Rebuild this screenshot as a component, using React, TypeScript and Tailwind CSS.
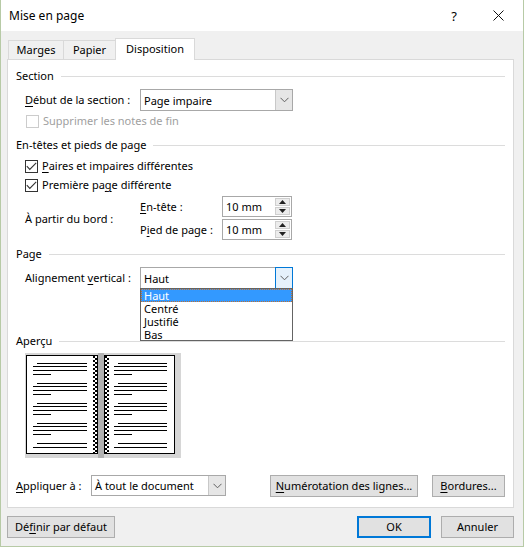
import * as React from "react";

const font = "font-['Segoe_UI','Noto_Sans',Roboto,sans-serif]";

const U = ({ children }: { children: React.ReactNode }) => (
  <span className="underline underline-offset-2">{children}</span>
);

const Chevron = () => (
  <svg width="9" height="6" viewBox="0 0 9 6">
    <path d="M0.5 0.8 L4.5 4.8 L8.5 0.8" fill="none" stroke="#606060" strokeWidth="1" />
  </svg>
);

const Select = (props) => (
  <div
    className={
      "relative flex h-full shrink-0 items-center border border-[#a8a8a8] bg-white " + props.className
    }
  >
    <span className="flex-1 whitespace-nowrap pl-[3px] leading-none">{props.value}</span>
    {props.focused ? (
      <div className="flex h-[calc(100%+2px)] w-[18px] -mr-px items-center justify-center border border-[#0078d7] bg-[#e5f1fb]">
        <Chevron />
      </div>
    ) : (
      <div className="flex h-full w-[17px] items-center justify-center border-l border-[#c8c8c8] bg-[#e6e6e6]">
        <Chevron />
      </div>
    )}
  </div>
);

const Check = (props) => (
  <div className="flex h-[16px] items-center">
    <div
      className={
        "flex h-[13px] w-[13px] items-center justify-center border bg-white " +
        (props.disabled ? "ml-[10px] border-[#cccccc]" : "ml-[9px] border-[#333333]")
      }
    >
      {props.checked && (
        <svg width="11" height="9" viewBox="0 0 11 9">
          <path d="M0.8 4.2 L3.8 7.4 L10.2 0.8" fill="none" stroke="#333" strokeWidth="1.1" />
        </svg>
      )}
    </div>
    <span
      className={
        "whitespace-nowrap " + (props.disabled ? "ml-[4px] text-[#a0a0a0]" : "ml-[4px] text-black")
      }
    >
      {props.children}
    </span>
  </div>
);

const Header = (props) => (
  <div className={"flex h-[14px] items-center " + props.className}>
    <span>{props.label}</span>
    <div className="ml-[7px] h-px flex-1 bg-[#dcdcdc]" />
  </div>
);

const Tri = ({ up }: { up?: boolean }) => (
  <svg width="7" height="4" viewBox="0 0 7 4">
    <path d={up ? "M0 4 L3.5 0 L7 4 Z" : "M0 0 L3.5 4 L7 0 Z"} fill="#222" />
  </svg>
);

const Spin = (props) => (
  <div className="flex h-[21px] w-[70px] shrink-0 items-center border border-[#a8a8a8] bg-white">
    <span className="flex-1 pl-[3px]">{props.value}</span>
    <div className="mr-[1px] flex h-full w-[15px] flex-col gap-px py-px">
      <div className="flex flex-1 items-center justify-center border border-[#cfcfcf] bg-[#ececec]">
        <Tri up />
      </div>
      <div className="flex flex-1 items-center justify-center border border-[#cfcfcf] bg-[#ececec]">
        <Tri />
      </div>
    </div>
  </div>
);

const Button = (props) => (
  <div
    className={
      "flex h-[22px] shrink-0 items-center justify-center whitespace-nowrap bg-[#e1e1e1] " +
      (props.primary ? "border-2 border-[#0078d7] " : "border border-[#adadad] ") +
      props.className
    }
  >
    {props.children}
  </div>
);

const Preview = () => {
  const groups = [9.5, 29.5, 49.5, 69.5, 89.5];
  const page = (x0: number, first: number, start: number, end: number, short: number) =>
    groups.map((gy, i) => {
      const ys = i === 4 ? [gy, gy + 4] : [gy, gy + 3.7, gy + 7.5, gy + 11.3];
      return ys.map((y, j) => {
        const yy = Math.round(y) + 0.5;
        const xa = j === 0 ? first : start;
        const xb = j === 3 ? short : end;
        return <line key={x0 + "-" + i + "-" + j} x1={xa} x2={xb} y1={yy} y2={yy} stroke="#000" />;
      });
    });
  const checker = (x: number) => {
    const out = [];
    for (let y = 3; y < 100; y += 2) {
      const odd = ((y - 3) / 2) % 2 === 1;
      out.push(<rect key={x + "c" + y} x={odd ? x + 2 : x} y={y} width="2" height="2" fill="#000" />);
    }
    return out;
  };
  return (
    <svg width="156" height="105" viewBox="0 0 156 105">
      <rect x="0" y="0" width="156" height="105" fill="#d6d6d6" />
      <rect x="73" y="0" width="6" height="105" fill="#b2b2b2" />
      <rect x="1.5" y="2.5" width="71" height="98" fill="#fff" stroke="#000" />
      <rect x="79.5" y="2.5" width="70" height="98" fill="#fff" stroke="#000" />
      {checker(68)}
      {checker(80)}
      {page(0, 12, 8, 62, 26)}
      {page(1, 93, 89, 142, 107)}
    </svg>
  );
};

export default function App() {
  return (
    <div
      className={
        "flex h-[547px] w-[524px] flex-col border-x border-b border-[#b7caa6] bg-[#f0f0f0] text-[11px] leading-[14px] text-black " +
        font
      }
    >
      {/* title bar */}
      <div className="flex h-[31px] items-center bg-white">
        <span className="ml-[8px] flex-1 text-[12px]">Mise en page</span>
        <span className="mr-[36px] text-[13px]">?</span>
        <svg className="mr-[19px]" width="11" height="11" viewBox="0 0 11 11">
          <path d="M0.5 0.5 L10.5 10.5 M10.5 0.5 L0.5 10.5" stroke="#111" strokeWidth="1" />
        </svg>
      </div>

      {/* tabs */}
      <div className="relative z-10 ml-[7px] mt-[7px] flex h-[21px] items-end">
        <div className="flex h-[19px] w-[55px] items-center justify-center border-l border-t border-[#d9d9d9]">
          Marges
        </div>
        <div className="flex h-[19px] w-[52px] items-center justify-center border-l border-t border-[#d9d9d9]">
          Papier
        </div>
        <div className="-mb-px flex h-[22px] w-[80px] items-center justify-center border-x border-t border-[#d9d9d9] bg-white pb-[2px]">
          Disposition
        </div>
      </div>

      {/* panel */}
      <div className="relative ml-[6px] flex h-[449px] w-[507px] flex-col border border-[#d9d9d9] bg-white pl-[8px] pr-[8px]">
        <Header label="Section" className="mt-[9px]" />
        <div className="mt-[6px] flex h-[22px] items-center">
          <span className="ml-[9px] w-[115px] shrink-0 whitespace-nowrap">
            <U>D</U>ébut de la section :
          </span>
          <Select className="w-[153px]" value="Page impaire" />
        </div>
        <div className="mt-[2px]">
          <Check disabled>Supprimer les notes de fin</Check>
        </div>

        <Header label="En-têtes et pieds de page" className="mt-[9px]" />
        <div className="mt-[6px]">
          <Check checked>
            <U>P</U>aires et impaires différentes
          </Check>
        </div>
        <div className="mt-[3px]">
          <Check checked>
            Première pa<U>g</U>e différente
          </Check>
        </div>
        <div className="mt-[3px] flex items-center">
          <span className="ml-[9px] mt-[2px] w-[115px] shrink-0 whitespace-nowrap">À partir du bord :</span>
          <div className="flex flex-col gap-[2px]">
            <div className="flex items-center">
              <span className="w-[82px] shrink-0 whitespace-nowrap">
                <U>E</U>n-tête :
              </span>
              <Spin value="10 mm" />
            </div>
            <div className="flex items-center">
              <span className="w-[82px] shrink-0 whitespace-nowrap">
                P<U>i</U>ed de page :
              </span>
              <Spin value="10 mm" />
            </div>
          </div>
        </div>

        <Header label="Page" className="mt-[7px]" />
        <div className="relative mt-[6px] flex h-[22px] items-center">
          <span className="ml-[9px] w-[115px] shrink-0 whitespace-nowrap">
            Alignement <U>v</U>ertical :
          </span>
          <Select className="w-[153px]" value="Haut" focused />
          <div className="absolute left-[124px] top-[21px] z-20 flex h-[53px] w-[153px] flex-col border border-[#646464] bg-white leading-[13px]">
            <div className="h-[13px] border border-dotted border-[#c07030] bg-[#3399ff] pl-[2px] leading-[11px] text-white">
              Haut
            </div>
            <div className="h-[13px] pl-[3px]">Centré</div>
            <div className="h-[13px] pl-[3px]">Justifié</div>
            <div className="h-[13px] pl-[3px]">Bas</div>
          </div>
        </div>

        <Header label="Aperçu" className="mt-[45px]" />
        <div className="ml-[9px] mt-[5px] h-[105px]">
          <Preview />
        </div>

        <div className="mt-[17px] flex h-[21px] items-center">
          <span className="w-[75px] shrink-0 whitespace-nowrap">
            <U>A</U>ppliquer à :
          </span>
          <Select className="w-[135px]" value="À tout le document" />
          <Button className="ml-[44px] w-[148px]">
            <span>
              <U>N</U>umérotation des lignes...
            </span>
          </Button>
          <Button className="ml-[14px] w-[73px]">
            <span>
              <U>B</U>ordures...
            </span>
          </Button>
        </div>
      </div>

      {/* bottom buttons */}
      <div className="mt-[8px] flex items-center">
        <Button className="ml-[6px] w-[108px]">
          <span>
            Dé<U>f</U>inir par défaut
          </span>
        </Button>
        <Button primary className="ml-[242px] w-[74px]">
          OK
        </Button>
        <Button className="ml-[10px] w-[73px]">Annuler</Button>
      </div>
    </div>
  );
}
